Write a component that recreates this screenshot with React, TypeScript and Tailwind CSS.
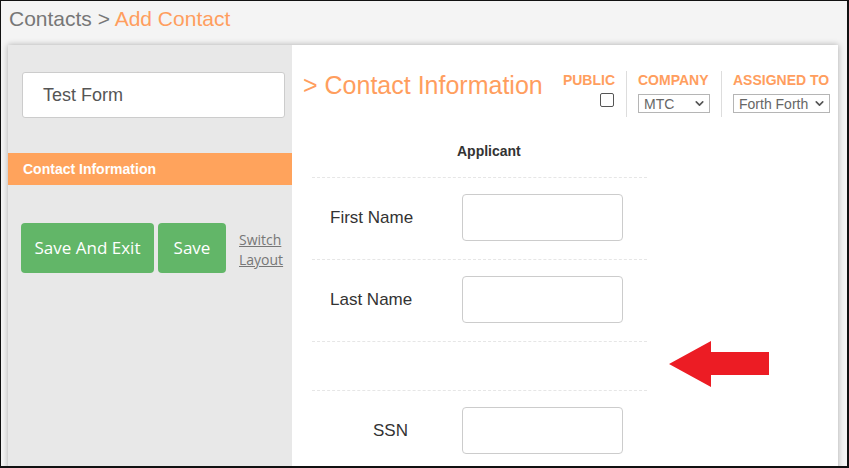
import { ChevronDown } from 'lucide-react'

const orange = 'text-[#ff9e5e]'

function Select({ value, width }: { value: string; width: string }) {
  return (
    <div
      className={`flex h-[19px] items-center justify-between border border-[#b5b5b5] bg-white pl-[5px] pr-[3px] text-[14px] leading-none text-[#666] ${width}`}
    >
      <span>{value}</span>
      <ChevronDown size={13} strokeWidth={3} className="text-[#555]" />
    </div>
  )
}

function Divider() {
  return <div className="mx-[11px] h-[46px] w-px bg-[#ddd]" />
}

function FieldRow({ label, labelPad }: { label: string; labelPad: string }) {
  return (
    <div className="flex h-[82px] items-center border-b border-dashed border-[#e6e6e6] pb-[2px]">
      <div className={`w-[150px] text-[17px] text-[#333] ${labelPad}`}>{label}</div>
      <div className="h-[47px] w-[161px] rounded-[4px] border border-[#ccc] bg-white" />
    </div>
  )
}

export default function App() {
  return (
    <div
      className="h-[468px] w-[849px] overflow-hidden border-t border-l border-r-2 border-b-2 border-[#111] bg-[#f4f4f4]"
      style={{ fontFamily: '"Liberation Sans", Arial, sans-serif' }}
    >
      <div className="pl-[8px] pt-[6px] text-[21px] leading-[23px]">
        <span className="text-[#777]">Contacts &gt; </span>
        <span className={orange}>Add Contact</span>
      </div>

      <div className="ml-[7px] mr-[9px] mt-[15px] flex h-[440px] bg-white shadow-[0_0_6px_rgba(0,0,0,0.3)]">
        {/* left panel */}
        <div className="w-[284px] shrink-0 bg-[#e8e8e8] pt-[27px]">
          <div className="ml-[14px] flex h-[46px] w-[263px] items-center rounded-[3px] border border-[#ccc] bg-white pl-[20px] text-[18px] text-[#555]">
            Test Form
          </div>
          <div className="mt-[35px] flex h-[32px] items-center bg-[#ffa35c] pl-[15px] text-[14px] font-bold text-white">
            Contact Information
          </div>
          <div
            className="ml-[13px] mt-[38px] flex items-center gap-[4px]"
            style={{ fontFamily: '"Open Sans", sans-serif' }}
          >
            <div className="flex h-[50px] w-[133px] items-center justify-center rounded-[4px] bg-[#62b668] text-[17px] text-white">
              Save And Exit
            </div>
            <div className="flex h-[50px] w-[68px] items-center justify-center rounded-[4px] bg-[#62b668] text-[17px] text-white">
              Save
            </div>
            <div className="ml-[9px] mt-[4px] text-[14px] leading-[20px] text-[#777] underline">
              Switch
              <br />
              Layout
            </div>
          </div>
        </div>

        {/* right panel */}
        <div className="relative flex-1">
          <div className="flex items-start pl-[11px] pr-[8px] pt-[26px]">
            <div className={`text-[25px] leading-[28px] ${orange}`}>&gt; Contact Information</div>
            <div className="ml-auto flex items-start">
              <div className="flex flex-col items-end">
                <div className={`text-[14px] font-bold leading-[16px] ${orange} mt-[1px]`}>PUBLIC</div>
                <div className="mt-[5px] mr-[1px] h-[14px] w-[14px] rounded-[2px] border border-[#555] bg-white" />
              </div>
              <Divider />
              <div className="flex flex-col">
                <div className={`text-[14px] font-bold leading-[16px] ${orange} mt-[1px]`}>COMPANY</div>
                <div className="mt-[6px]">
                  <Select value="MTC" width="w-[72px]" />
                </div>
              </div>
              <Divider />
              <div className="flex flex-col">
                <div className={`text-[14px] font-bold leading-[16px] ${orange} mt-[1px]`}>ASSIGNED TO</div>
                <div className="mt-[6px]">
                  <Select value="Forth Forth" width="w-[97px]" />
                </div>
              </div>
            </div>
          </div>

          <div className="ml-[20px] mt-[13px] w-[335px]">
            <div className="h-[48px] border-b border-dashed border-[#e6e6e6] pl-[145px] pt-[13px] text-[14px] leading-[16px] font-bold text-[#333]">
              Applicant
            </div>
            <FieldRow label="First Name" labelPad="pl-[18px]" />
            <FieldRow label="Last Name" labelPad="pl-[18px]" />
            <div className="h-[49px] border-b border-dashed border-[#e6e6e6]" />
            <FieldRow label="SSN" labelPad="pl-[61px]" />
          </div>

          <svg
            className="absolute left-[377px] top-[295px]"
            width="101"
            height="48"
            viewBox="0 0 101 48"
          >
            <polygon points="0,24 42,1 42,12 100,12 100,35 42,35 42,47" fill="#ec1c24" />
          </svg>
        </div>
      </div>
    </div>
  )
}
